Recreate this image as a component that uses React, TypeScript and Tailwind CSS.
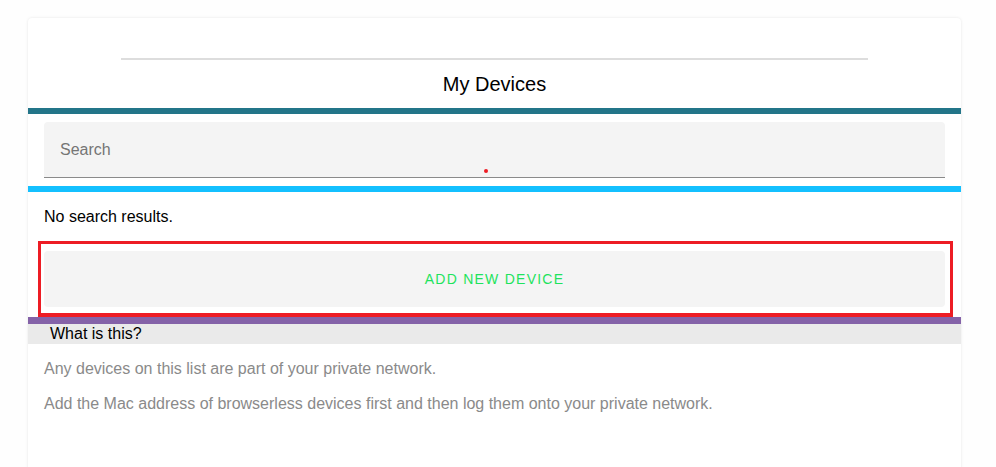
import React, { useState } from 'react';

const App: React.FC = () => {
  const [query, setQuery] = useState('');

  return (
    <div className="min-h-[467px] bg-[#fefefe] pt-[18px] pl-[28px] pr-[35px] font-['Liberation_Sans',Arial,sans-serif]">
      <div className="bg-white rounded-[4px] shadow-[0_0_3px_rgba(0,0,0,0.1)] min-h-[460px] pt-[40px]">
        {/* Header */}
        <div className="mx-auto w-4/5 h-[2px] bg-[#dddddd]" />
        <h2 className="mt-[12px] mb-[12px] text-center text-[20px] leading-[24px] text-black">
          My Devices
        </h2>
        <div className="h-[6px] bg-[#237589]" />

        {/* Search */}
        <div className="mx-[16px] mt-[8px] relative">
          <input
            value={query}
            onChange={(e) => setQuery(e.target.value)}
            placeholder="Search"
            className="w-full h-[56px] bg-[#f4f4f4] rounded-t-[4px] border-b border-[#8a8a8a] px-[16px] text-[16px] text-black placeholder:text-[#757575] outline-none"
          />
          <span className="absolute left-[440px] top-[47px] w-[4px] h-[4px] rounded-full bg-[#ed1c24]" />
        </div>
        <div className="mt-[8px] h-[6px] bg-[#14c0ff]" />

        {/* Results */}
        <p className="mt-[16px] ml-[16px] text-[16px] leading-[18px] text-black">No search results.</p>

        <div className="mt-[15px] ml-[10px] mr-[8px] border-[3px] border-b-[4px] border-[#ed1c24] pt-[7px] pb-[6px] pl-[3px] pr-[5px]">
          <button className="w-full h-[56px] bg-[#f4f4f4] rounded-[4px] text-[14px] tracking-[1.25px] text-[#1ee35d] uppercase">
            Add new device
          </button>
        </div>

        {/* Info */}
        <div className="h-[7px] bg-[#8462a8]" />
        <div className="h-[20px] bg-[#eaeaea] pl-[22px] text-[16px] leading-[20px] text-black">What is this?</div>
        <div className="px-[16px] text-[16px] leading-[18px] text-[#8a8a8a]">
          <p className="mt-[16px]">Any devices on this list are part of your private network.</p>
          <p className="mt-[17px]">Add the Mac address of browserless devices first and then log them onto your private network.</p>
        </div>
      </div>
    </div>
  );
};

export default App;
